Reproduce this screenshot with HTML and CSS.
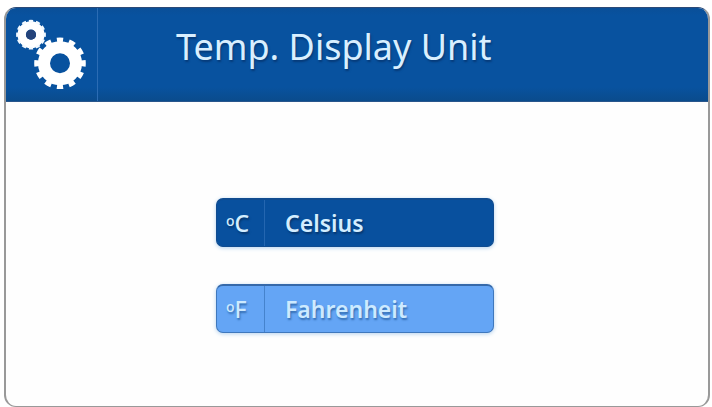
FILE: index.html
```html
<!DOCTYPE html>
<html lang="en">
<head>
<meta charset="utf-8">
<title>Temp. Display Unit</title>
<link rel="stylesheet" href="styles.css">
</head>
<body>
<main class="panel">
  <header class="header">
    <div class="header-icon">
      <svg class="gears" viewBox="0 0 92 92" aria-hidden="true">
        <g fill="none" stroke="#fff">
          <circle cx="25" cy="26.7" r="9.3" stroke-width="8.4"/>
          <circle cx="25" cy="26.7" r="13.6" stroke-width="2.6" pathLength="120" stroke-dasharray="6 4" stroke-dashoffset="3" stroke="#f2f9ff"/>
          <circle cx="54" cy="55.3" r="16" stroke-width="12"/>
          <circle cx="54" cy="55.3" r="23.3" stroke-width="5" pathLength="120" stroke-dasharray="5.2 4.8" stroke-dashoffset="-27.4"/>
        </g>
        <circle cx="25" cy="26.7" r="5" fill="#24437a"/>
      </svg>
    </div>
    <h1 class="title">Temp. Display Unit</h1>
  </header>
  <div class="options">
    <button class="option option-selected" type="button" aria-pressed="true">
      <span class="unit"><span class="degree">o</span>C</span><span class="name">Celsius</span>
    </button>
    <button class="option" type="button" aria-pressed="false">
      <span class="unit"><span class="degree">o</span>F</span><span class="name">Fahrenheit</span>
    </button>
  </div>
</main>
</body>
</html>
```
FILE: styles.css
```css
* { box-sizing: border-box; }

body {
  margin: 0;
  padding: 7px 2px 0 4px;
  min-height: 100vh;
  display: flex;
  background: #fff;
  font-family: "Noto Sans", "Open Sans", sans-serif;
}

.panel {
  flex: 1;
  border: 2px solid #999;
  border-top: 1px solid #2b4a78;
  border-bottom-width: 1px;
  border-radius: 12px;
  overflow: hidden;
  background: #fefefe;
}

.header {
  display: flex;
  height: 94px;
  background: linear-gradient(#0a4f98, #08529f 8%, #08529f 85%, #0a4b8c);
  border-bottom: 1px solid #28568c;
  color: #d9efff;
}

.header-icon {
  width: 92px;
  border-right: 1px solid #2b6cb4;
}

.gears {
  display: block;
  width: 92px;
  height: 92px;
}

.title {
  margin: 0;
  padding: 13px 0 0 78px;
  font-size: 36px;
  line-height: 52px;
  font-weight: 400;
  text-shadow: 1px 2px 2px #063a78;
}

.options {
  display: flex;
  flex-direction: column;
  align-items: center;
  gap: 37px;
  padding: 96px 4px 0 0;
}

.option {
  display: flex;
  width: 278px;
  height: 49px;
  padding: 0;
  border: 1px solid #3f78bd;
  border-top: 2px solid #3569aa;
  border-radius: 7px;
  background: #64a5f5;
  box-shadow: 0 1px 4px #b4d2ee;
  color: #cdeaff;
  font: 600 23px/46px "Noto Sans", "Open Sans", sans-serif;
  text-align: left;
  text-shadow: 1px 2px 2px #356fb4;
}

.option-selected {
  border-color: #104c90;
  background: #08509e;
  color: #d3edff;
  text-shadow: 1px 2px 2px #06366e;
}

.unit {
  width: 48px;
  padding-left: 9px;
  border-right: 1px solid #4583cd;
  align-self: stretch;
  font-weight: 500;
}

.option-selected .unit { border-right-color: #2466b0; }

.degree {
  font-size: 14px;
  vertical-align: 6px;
  line-height: 1;
}

.name { padding-left: 20px; }
```
